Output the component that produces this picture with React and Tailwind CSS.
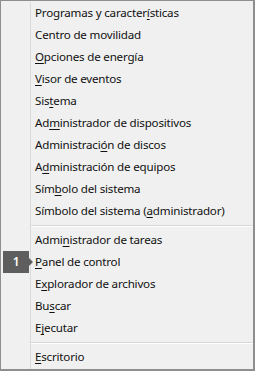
import React from 'react';

const groups = [
  [
    ['Programas y caracter', 'í', 'sticas'],
    ['Centro de movilidad', '', ''],
    ['', 'O', 'pciones de energía'],
    ['', 'V', 'isor de eventos'],
    ['Sis', 't', 'ema'],
    ['Ad', 'm', 'inistrador de dispositivos'],
    ['Administraci', 'ó', 'n de discos'],
    ['A', 'd', 'ministración de equipos'],
    ['Sím', 'b', 'olo del sistema'],
    ['Símbolo del sistema (', 'a', 'dministrador)'],
  ],
  [
    ['Admi', 'n', 'istrador de tareas'],
    ['', 'P', 'anel de control'],
    ['E', 'x', 'plorador de archivos'],
    ['Bu', 's', 'car'],
    ['E', 'j', 'ecutar'],
  ],
  [['', 'E', 'scritorio']],
];

function Separator() {
  return (
    <div className="h-[7px] flex flex-col justify-center">
      <div className="border-t border-[#d7d7d7] border-b border-b-white" />
    </div>
  );
}

export default function App() {
  return (
    <div
      className="relative w-[255px] h-[371px] bg-[#f0f0f0] border border-[#8e8e8e] border-r-2 border-b-2 pt-[1px] text-[11.6px] tracking-[-0.2px] text-[#111] overflow-hidden"
      style={{ fontFamily: '"Noto Sans", sans-serif' }}
    >
      <div className="ml-[29px] h-full border-l border-[#dadada]">
        {groups.map((group, gi) => (
          <div key={gi}>
            {gi > 0 && <Separator />}
            {group.map(([a, k, b], i) => (
              <div key={i} className="h-[22px] flex items-center pl-[4px] whitespace-nowrap">
                <span>
                  {a}
                  {k && <span className="underline underline-offset-2">{k}</span>}
                  {b}
                </span>
              </div>
            ))}
          </div>
        ))}
      </div>

      {/* tooltip badge */}
      <div className="absolute left-[2px] top-[250px] flex items-center">
        <div className="w-[26px] h-[22px] bg-[#5e5e5e] text-white font-semibold flex items-center justify-center text-[12px]">1</div>
        <div className="w-0 h-0 border-y-[4px] border-y-transparent border-l-[4px] border-l-[#5e5e5e]" />
      </div>
    </div>
  );
}
